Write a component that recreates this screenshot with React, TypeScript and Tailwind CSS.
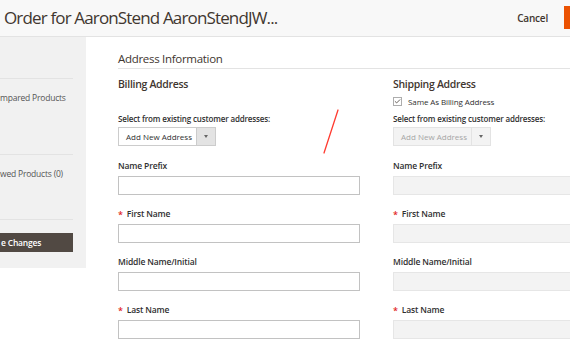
import { Check } from "lucide-react";

const font = { fontFamily: '"Open Sans", "Noto Sans", sans-serif' };

function Field({ label, required, disabled }: { label: string; required?: boolean; disabled?: boolean }) {
  return (
    <div className="h-[48px]">
      <div className="h-[20px] flex items-center text-[8.5px] font-semibold tracking-[-0.15px] text-[#303030] leading-none whitespace-nowrap">
        {required && <span className="text-[#e22626] mr-[4px] text-[9px]">*</span>}
        {label}
      </div>
      <div
        className={`h-[19px] border ${
          disabled ? "bg-[#f3f3f3] border-[#e6e6e6] w-[200px]" : "bg-white w-[242px] border-[#c2c2c2]"
        }`}
      />
    </div>
  );
}

function AddressSelect({ disabled }: { disabled?: boolean }) {
  return (
    <div
      className={`flex h-[19px] w-[98px] border text-[8px] ${
        disabled ? "border-[#e3e3e3] bg-[#f3f3f3] text-[#a6a6a6]" : "border-[#cccccc] bg-white text-[#303030]"
      }`}
    >
      <div className="flex-1 flex items-center pl-[7px] leading-none whitespace-nowrap">Add New Address</div>
      <div
        className={`w-[19px] flex items-center justify-center border-l ${
          disabled ? "border-[#e3e3e3] bg-[#f3f3f3]" : "border-[#cccccc] bg-[#e3e3e3]"
        }`}
      >
        <span className="block w-0 h-0 border-l-[2.5px] border-r-[2.5px] border-t-[3px] border-l-transparent border-r-transparent border-t-[#666]" />
      </div>
    </div>
  );
}

export default function App() {
  return (
    <div className="w-[570px] h-[350px] overflow-hidden bg-white relative" style={font}>
      {/* Header */}
      <div className="h-[37px] bg-[#f8f8f8] border-b border-[#e3e3e3] flex items-center pl-[4px]">
        <div className="flex-1 text-[17px] tracking-[-0.85px] text-[#41362f] leading-none pb-[2px] whitespace-nowrap">
          Order for AaronStend AaronStendJW...
        </div>
        <div className="text-[10px] font-semibold tracking-[-0.2px] text-[#41362f] mr-[16px]">Cancel</div>
        <div className="w-[6px] h-[23px] bg-[#eb5202] mb-[1px]" />
      </div>

      <div className="flex">
        {/* Sidebar */}
        <div className="w-[86px] h-[231px] bg-[#f1f1f1] shrink-0 pr-[13px] text-[8.5px] tracking-[-0.2px] leading-[12px] text-[#555] whitespace-nowrap">
          <div className="h-[42px] border-b border-[#e3e3e3]" />
          <div className="h-[76px] border-b border-[#e3e3e3] pt-[13px]">mpared Products</div>
          <div className="h-[65px] border-b border-[#e3e3e3] pt-[13px]">wed Products (0)</div>
          <div className="pt-[13px]">
            <div className="h-[19px] bg-[#514943] border border-[#514943] text-white font-semibold flex items-center">
              e Changes
            </div>
          </div>
        </div>

        {/* Main */}
        <div className="flex-1 pl-[32px]">
          <div className="h-[32px] border-b border-[#e3e3e3] flex items-end pb-[4px] text-[11.5px] tracking-[-0.3px] text-[#41362f] leading-none">
            Address Information
          </div>
          <div className="flex gap-[32px]">
            <div className="w-[243px] shrink-0">
              <div className="h-[27px] flex items-center pt-[4px] text-[10.5px] tracking-[-0.3px] font-semibold text-[#41362f] leading-none">
                Billing Address
              </div>
              <div className="h-[18px]" />
              <div className="h-[10px] flex items-center text-[8px] tracking-[-0.15px] font-semibold text-[#303030] leading-none whitespace-nowrap">
                Select from existing customer addresses:
              </div>
              <div className="mt-[3px]">
                <AddressSelect />
              </div>
              <div className="mt-[10px]">
                <Field label="Name Prefix" />
                <Field label="First Name" required />
                <Field label="Middle Name/Initial" />
                <Field label="Last Name" required />
              </div>
            </div>
            <div className="flex-1">
              <div className="h-[27px] flex items-center pt-[4px] text-[10.5px] tracking-[-0.3px] font-semibold text-[#41362f] leading-none">
                Shipping Address
              </div>
              <div className="h-[11px] flex items-center gap-[6px] text-[8px] tracking-[-0.1px] text-[#303030] leading-none whitespace-nowrap">
                <span className="w-[9px] h-[9px] border border-[#adadad] bg-white flex items-center justify-center">
                  <Check size={7} strokeWidth={3} color="#514943" />
                </span>
                Same As Billing Address
              </div>
              <div className="h-[7px]" />
              <div className="h-[10px] flex items-center text-[8px] tracking-[-0.15px] font-semibold text-[#303030] leading-none whitespace-nowrap">
                Select from existing customer addresses:
              </div>
              <div className="mt-[3px]">
                <AddressSelect disabled />
              </div>
              <div className="mt-[10px]">
                <Field label="Name Prefix" disabled />
                <Field label="First Name" required disabled />
                <Field label="Middle Name/Initial" disabled />
                <Field label="Last Name" required disabled />
              </div>
            </div>
          </div>
        </div>
      </div>

      {/* Red annotation stroke */}
      <svg className="absolute left-[320px] top-[106px]" width="24" height="52" viewBox="0 0 24 52">
        <line x1="18" y1="4" x2="4" y2="47" stroke="#ff3b30" strokeWidth="1.3" strokeLinecap="round" />
      </svg>
    </div>
  );
}
